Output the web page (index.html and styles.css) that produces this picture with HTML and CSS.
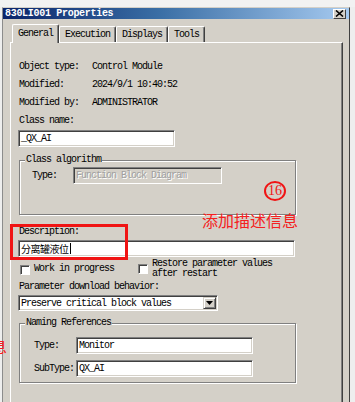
FILE: index.html
```html
<!DOCTYPE html>
<html lang="en">
<head>
    <meta charset="UTF-8">
    <title>830LI001 Properties</title>
    <link rel="stylesheet" href="styles.css">
</head>
<body>

<div class="top-strip"></div>

<div class="window">
    <div class="titlebar">
        <span class="title">830LI001 Properties</span>
        <span class="close-btn">
            <svg width="9" height="7" viewBox="0 0 9 7"><path d="M1 0.5 L8 6.5 M8 0.5 L1 6.5" stroke="#000" stroke-width="1.6"/></svg>
        </span>
    </div>

    <div class="tabs">
        <div class="tab active">General</div>
        <div class="tab">Execution</div>
        <div class="tab">Displays</div>
        <div class="tab">Tools</div>
    </div>

    <div class="panel">
        <div class="info">
            <span>Object type:</span><span>Control Module</span>
            <span>Modified:</span><span>2024/9/1 10:40:52</span>
            <span>Modified by:</span><span>ADMINISTRATOR</span>
        </div>

        <div class="label">Class name:</div>
        <div class="field class-name">_QX_AI</div>

        <fieldset class="group algo">
            <legend>Class algorithm</legend>
            <div class="group-body">
                <div class="row">
                    <span class="row-label">Type:</span>
                    <div class="field disabled">Function Block Diagram</div>
                </div>
            </div>
        </fieldset>

        <div class="label desc-label">Description:</div>
        <div class="field desc"><span class="cjk">分离罐液位</span><span class="caret"></span></div>

        <div class="checks">
            <div class="check first">
                <span class="box"></span>
                <span class="check-text">Work in progress</span>
            </div>
            <div class="check second">
                <span class="box"></span>
                <span class="check-text">Restore parameter values<br>after restart</span>
            </div>
        </div>

        <div class="label param-label">Parameter download behavior:</div>
        <div class="select">
            <span class="select-text">Preserve critical block values</span>
            <span class="drop-btn">
                <svg width="7" height="4" viewBox="0 0 7 4"><path d="M0 0 H7 L3.5 4 Z" fill="#000"/></svg>
            </span>
        </div>

        <fieldset class="group naming">
            <legend>Naming References</legend>
            <div class="group-body">
                <div class="row">
                    <span class="row-label">Type:</span>
                    <div class="field">Monitor</div>
                </div>
                <div class="row">
                    <span class="row-label">SubType:</span>
                    <div class="field">QX_AI</div>
                </div>
            </div>
        </fieldset>
    </div>
</div>

<!-- red annotations drawn over the screenshot -->
<div class="note-box"></div>
<div class="note-num">16</div>
<div class="note-text">添加描述信息</div>
<div class="note-edge">息</div>

</body>
</html>
```

FILE: styles.css
```css
body {
    margin: 0;
    width: 355px;
    height: 402px;
    overflow: hidden;
    position: relative;
    background-color: #eeeeee;
    font-family: "Liberation Mono", "Noto Sans CJK SC", monospace;
    font-size: 10px;
    letter-spacing: -1px;
    color: #000;
}

.top-strip {
    height: 7px;
    background-color: #f2f2f2;
}

/* Window frame */
.window {
    margin-left: 2px;
    width: 346px;
    height: 394px;
    overflow: hidden;
    background-color: #d4d0c8;
    border-left: 1px solid #8c8c8c;
    border-right: 1px solid #404040;
    border-top: 1px solid #d4d0c8;
}

.titlebar {
    height: 11px;
    padding: 0 3px 0 2px;
    display: flex;
    align-items: center;
    justify-content: space-between;
    background: linear-gradient(to right, #0a246a, #3a6ea5 45%, #a6caf0);
}

.title {
    color: #fff;
    font-weight: bold;
    letter-spacing: -0.3px;
    line-height: 11px;
}

.close-btn {
    width: 13px;
    height: 10px;
    box-sizing: border-box;
    display: flex;
    align-items: center;
    justify-content: center;
    background-color: #d4d0c8;
    border: 1px solid;
    border-color: #fff #404040 #404040 #fff;
}

/* Tabs */
.tabs {
    display: flex;
    align-items: flex-end;
    padding: 5px 0 0 9px;
}

.tab {
    height: 16px;
    box-sizing: border-box;
    padding: 0 5px;
    line-height: 15px;
    border: 1px solid;
    border-color: #fff #404040 transparent #fff;
    border-bottom: none;
    border-radius: 2px 2px 0 0;
    box-shadow: inset -1px 0 0 #808080;
}

.tab.active {
    height: 19px;
    padding-top: 1px;
    margin-bottom: -1px;
    position: relative;
    z-index: 1;
    background-color: #d4d0c8;
}

/* Page panel */
.panel {
    margin: 0 6px 0 7px;
    height: 345px;
    padding: 15px 8px 0;
    border: 1px solid;
    border-color: #fff #404040 #404040 #fff;
    box-shadow: inset -1px -1px 0 #808080;
}

.info {
    display: grid;
    grid-template-columns: 73px 1fr;
    grid-auto-rows: 18px;
    line-height: 18px;
}

.label {
    line-height: 17px;
}

.field {
    height: 17px;
    box-sizing: border-box;
    margin-left: -1px;
    padding: 0 2px;
    line-height: 15px;
    background-color: #fff;
    border: 1px solid;
    border-color: #808080 #fff #fff #808080;
    box-shadow: inset 1px 1px 0 #404040, inset -1px -1px 0 #d4d0c8;
    white-space: nowrap;
    overflow: hidden;
}

.field.disabled {
    background-color: #d4d0c8;
    color: #a0a0a0;
    text-shadow: 1px 1px 0 #fff;
}

.class-name {
    width: 157px;
    margin-top: 1px;
}

/* Group boxes */
.group {
    margin: 7px 0 0;
    padding: 0;
    width: 277px;
    min-width: 0;
    box-sizing: border-box;
    border: 1px solid #808080;
    box-shadow: 1px 1px 0 #fff, inset 1px 1px 0 #fff;
}

.group legend {
    margin-left: 5px;
    padding: 0 1px;
    line-height: 12px;
    background-color: #d4d0c8;
}

.row {
    display: flex;
    align-items: center;
}

.algo .group-body {
    padding: 1px 0 30px 12px;
}

.algo .row-label {
    width: 41px;
}

.algo .field {
    width: 149px;
    margin-left: 0;
}

.naming {
    margin-top: 6px;
}

.naming .group-body {
    padding: 8px 0 5px 14px;
}

.naming .row + .row {
    margin-top: 6px;
}

.naming .row-label {
    width: 42px;
}

.naming .field {
    width: 177px;
    margin-left: 0;
}

/* Description */
.desc-label {
    margin-top: 10px;
    line-height: 14px;
}

.desc {
    width: 277px;
    margin-top: 1px;
    display: flex;
    align-items: center;
}

.cjk {
    font-family: "Noto Sans CJK SC", sans-serif;
    letter-spacing: -0.5px;
}

.caret {
    width: 1px;
    height: 11px;
    margin-left: 1px;
    background-color: #000;
}

/* Checkboxes */
.checks {
    display: flex;
    height: 20px;
    margin-top: 2px;
}

.check {
    display: flex;
    align-items: flex-start;
}

.check.first {
    width: 118px;
    margin-left: 1px;
}

.box {
    width: 10px;
    height: 10px;
    box-sizing: border-box;
    margin-top: 6px;
    background-color: #fff;
    border: 1px solid;
    border-color: #808080 #fff #fff #808080;
    box-shadow: inset 1px 1px 0 #404040;
    flex-shrink: 0;
}

.check-text {
    margin-left: 4px;
    line-height: 10px;
}

.check.first .check-text {
    margin-top: 5px;
}

.check.second .box {
    margin-top: 5px;
}

/* Dropdown */
.param-label {
    margin-top: 2px;
    line-height: 12px;
}

.select {
    width: 200px;
    height: 16px;
    box-sizing: border-box;
    margin: 2px 0 0 -1px;
    padding: 0 1px 0 2px;
    display: flex;
    align-items: center;
    justify-content: space-between;
    background-color: #fff;
    border: 1px solid;
    border-color: #808080 #fff #fff #808080;
    box-shadow: inset 1px 1px 0 #404040, inset -1px -1px 0 #d4d0c8;
}

.drop-btn {
    width: 13px;
    height: 12px;
    box-sizing: border-box;
    display: flex;
    align-items: center;
    justify-content: center;
    background-color: #d4d0c8;
    border: 1px solid;
    border-color: #d4d0c8 #404040 #404040 #d4d0c8;
    box-shadow: inset 1px 1px 0 #fff, inset -1px -1px 0 #808080;
}

/* Red annotations */
.note-box {
    position: absolute;
    left: 10px;
    top: 224px;
    width: 118px;
    height: 36px;
    box-sizing: border-box;
    border: 3px solid #f01414;
}

.note-num {
    position: absolute;
    left: 264px;
    top: 181px;
    width: 22px;
    height: 20px;
    box-sizing: border-box;
    border: 2px solid #f01414;
    border-radius: 50%;
    color: #f01414;
    font: 14px/16px "Liberation Serif", serif;
    letter-spacing: 0;
    text-align: center;
}

.note-text {
    position: absolute;
    left: 202px;
    top: 211px;
    color: #f52020;
    font: 16px/18px "Noto Sans CJK SC", sans-serif;
    letter-spacing: 0;
}

.note-edge {
    position: absolute;
    left: -9px;
    top: 337px;
    color: #f52020;
    font: 16px/18px "Noto Sans CJK SC", sans-serif;
}
```
